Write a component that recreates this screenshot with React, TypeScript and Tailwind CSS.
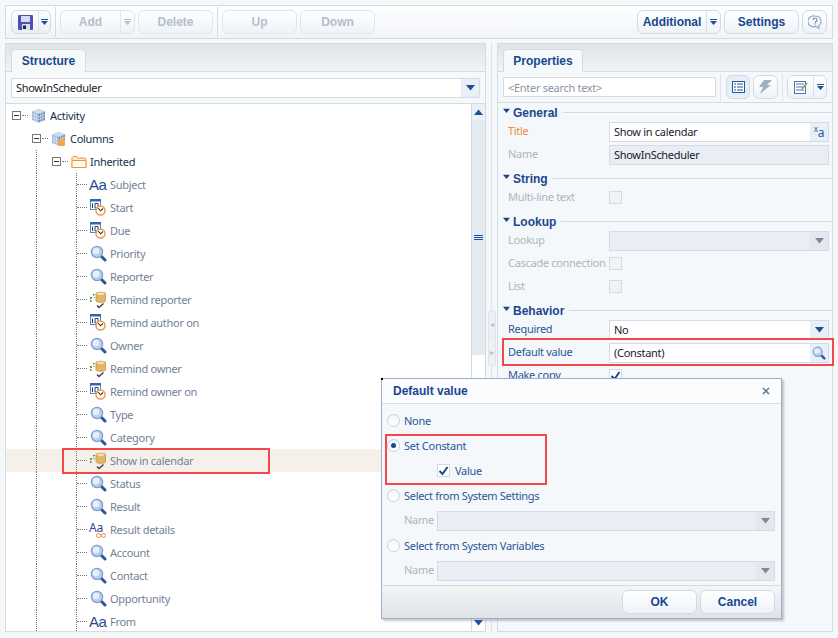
import React from 'react';

const boldFont = "font-['Liberation_Sans',sans-serif] font-bold text-[12px] tracking-normal";

const Caret = ({ color = '#1d4f9c', className = '' }: { color?: string; className?: string }) => (
  <svg className={className} width="9" height="6" viewBox="0 0 9 6"><path d="M0 0h9L4.5 5.5z" fill={color} /></svg>
);

const SmallCaret = ({ color = '#1d4f9c' }: { color?: string }) => (
  <svg width="7" height="6" viewBox="0 0 7 6"><path d="M0 0h7v1H0z" fill={color} /><path d="M0 2h7L3.5 6z" fill={color} /></svg>
);

const SearchIcon = ({ size = 17 }: { size?: number }) => (
  <svg width={size} height={size} viewBox="0 0 17 17">
    <path d="M10.500 10.500l4.500 4.500" stroke="#2f5596" strokeWidth="3" strokeLinecap="round" />
    <circle cx="7" cy="7" r="5.600" fill="#b9d0ee" stroke="#7f9fd2" strokeWidth="1.300" />
    <circle cx="6" cy="6" r="3.200" fill="#e6f0fb" />
  </svg>
);

const CalendarIcon = () => (
  <svg width="17" height="17" viewBox="0 0 17 17">
    <rect x="1.500" y="0.500" width="10" height="10" fill="#fff" stroke="#5c86c0" />
    <rect x="1" y="0" width="11" height="2.500" fill="#3566ad" />
    <path d="M3.500 4.500v4.500M6 4.500h3v4.500H6z" stroke="#1f3f7a" fill="none" />
    <circle cx="11.500" cy="11.500" r="4.500" fill="#fff" stroke="#ee9a4d" strokeWidth="1.500" />
    <path d="M9 9l2.500 2.800L14 9.500" stroke="#333" strokeWidth="1.100" fill="none" />
  </svg>
);

const BoolIcon = () => (
  <svg width="17" height="18" viewBox="0 0 17 18">
    <path d="M7 2.500C7 .8 16.500 .8 16.500 2.500V10c0 1.700-9.500 1.700-9.500 0z" fill="#e3b565" stroke="#bb9650" strokeWidth="0.800" />
    <ellipse cx="11.700" cy="2.800" rx="3.800" ry="1.200" fill="#f6e0ac" />
    <path d="M1 7h2M2 6v2M4 3.500h1.500M4.700 3v1.500M1 10h1.500M1.700 9.300v1.500M4.500 6.500h1" stroke="#1d8a1d" strokeWidth="1" />
    <path d="M8 14.500l2 2 4.500-4" stroke="#444" strokeWidth="1.500" fill="none" />
  </svg>
);

const LinkTextIcon = () => (
  <span className="relative block w-[17px] h-[18px] text-[#2a4a8e] text-[12px] leading-[13px] -tracking-[0.2px]">
    Aa
    <svg className="absolute left-[7px] top-[12px]" width="10" height="5" viewBox="0 0 10 5">
      <circle cx="2.500" cy="2.500" r="2" fill="none" stroke="#ee8a3a" />
      <circle cx="7.500" cy="2.500" r="2" fill="none" stroke="#ee8a3a" />
    </svg>
  </span>
);

const TextIcon = () => <span className="block w-[17px] font-['Liberation_Sans',sans-serif] text-[#2a4a8e] text-[15px] leading-[17px] tracking-[-0.6px]">Aa</span>;

const CubeIcon = ({ orange = false }: { orange?: boolean }) => (
  <svg width="15" height="15" viewBox="0 0 15 15">
    <path d="M1 3.500L7.500 1 14 3.500V12l-6.500 2.500L1 12z" fill="#9db6d8" />
    <path d="M1 3.500l6.500 2.500L14 3.500 7.500 1z" fill="#c4d4e8" />
    <path d="M7.500 6v8.500L14 12V3.500z" fill="#6f8fbd" />
    <path d="M3.200 4.300v9M5.300 5.100v9M9.700 5.100v9M11.800 4.300v9M1 6.300l6.500 2.500L14 6.300M1 9.100l6.500 2.500L14 9.100M3.200 2.600l6.500 2.500M5.300 1.800l6.500 2.500" stroke="#eaf0f7" strokeWidth="0.600" fill="none" />
    {orange && <rect x="7" y="8" width="7" height="7" rx="1" fill="#f2a64e" />}
  </svg>
);

const FolderIcon = () => (
  <svg width="16" height="14" viewBox="0 0 16 14">
    <path d="M1 12.500V2.500l1-1h3.500l1 1.500H14l1 1v8.500z" fill="#ffe9c8" stroke="#ea943c" />
    <path d="M1 12.500V7l1-1.500h12L15 7v5.500z" fill="#fffaf0" stroke="#ea943c" />
  </svg>
);

const Expander = () => (
  <span className="flex items-center justify-center w-[9px] h-[9px] border border-[#777] bg-white shrink-0">
    <span className="w-[5px] h-px bg-[#333]" />
  </span>
);

const Dots = ({ w }: { w: string }) => <span className={`border-t border-dotted border-[#777] shrink-0 ${w}`} />;

type Leaf = { label: string; icon: 'search' | 'text' | 'cal' | 'bool' | 'link'; selected?: boolean };

const leaves: Leaf[] = [
  { label: 'Subject', icon: 'text' },
  { label: 'Start', icon: 'cal' },
  { label: 'Due', icon: 'cal' },
  { label: 'Priority', icon: 'search' },
  { label: 'Reporter', icon: 'search' },
  { label: 'Remind reporter', icon: 'bool' },
  { label: 'Remind author on', icon: 'cal' },
  { label: 'Owner', icon: 'search' },
  { label: 'Remind owner', icon: 'bool' },
  { label: 'Remind owner on', icon: 'cal' },
  { label: 'Type', icon: 'search' },
  { label: 'Category', icon: 'search' },
  { label: 'Show in calendar', icon: 'bool', selected: true },
  { label: 'Status', icon: 'search' },
  { label: 'Result', icon: 'search' },
  { label: 'Result details', icon: 'link' },
  { label: 'Account', icon: 'search' },
  { label: 'Contact', icon: 'search' },
  { label: 'Opportunity', icon: 'search' },
  { label: 'From', icon: 'text' },
];

const LeafIcon = ({ icon }: { icon: Leaf['icon'] }) => {
  if (icon === 'search') return <span className="pl-[1px] w-[17px]"><SearchIcon /></span>;
  if (icon === 'cal') return <CalendarIcon />;
  if (icon === 'bool') return <BoolIcon />;
  if (icon === 'link') return <LinkTextIcon />;
  return <TextIcon />;
};

const VLine = ({ className = '' }: { className?: string }) => (
  <span className={`self-stretch border-l border-dotted border-[#777] shrink-0 ${className}`} />
);

const ToolButton = ({ label, className, disabled, split }: { label: string; className: string; disabled?: boolean; split?: boolean }) => (
  <div className={`flex h-6 items-stretch rounded-[6px] border bg-linear-to-b from-white to-[#eef3f8] ${boldFont} ${disabled ? 'border-[#dfe5ec] text-[#b4bfcc]' : 'border-[#cfdbe8] text-[#17488f]'} ${className}`}>
    <span className="flex-1 flex items-center justify-center">{label}</span>
    {split && (
      <span className={`w-[14px] flex items-center justify-center border-l ${disabled ? 'border-[#e3e8ee]' : 'border-[#d9e2ec]'}`}>
        <SmallCaret color={disabled ? '#b4bfcc' : '#1d4f9c'} />
      </span>
    )}
  </div>
);

const Section = ({ title }: { title: string }) => (
  <div className={`flex items-center h-[15px] mt-[5px] first:mt-[2px] pl-[5px] text-[#1b4590] ${boldFont}`}>
    <Caret className="mr-[3px] -mt-[3px] !w-[7px]" color="#1b4590" />
    <span>{title}</span>
    <span className="flex-1 ml-[5px] border-t border-[#d3dae1]" />
  </div>
);

const Label = ({ children, tone = 'disabled' }: { children: React.ReactNode; tone?: 'disabled' | 'active' | 'orange' }) => (
  <span className={`w-[101px] shrink-0 whitespace-nowrap ${tone === 'orange' ? 'text-[#f08a3c]' : tone === 'active' ? 'text-[#2c5597]' : 'text-[#aab5c3]'}`}>{children}</span>
);

const Check = () => (
  <svg width="11" height="10" viewBox="0 0 11 10"><path d="M1.500 5l3 3 5-7" stroke="#17488f" strokeWidth="2" fill="none" /></svg>
);

const CheckBox = ({ checked }: { checked?: boolean }) => (
  <span className={`flex items-center justify-center w-[13px] h-[13px] border border-[#d3dae2] ${checked ? 'bg-white' : 'bg-[#f0f3f6]'}`}>{checked && <Check />}</span>
);

const FieldRow = ({ children }: { children: React.ReactNode }) => (
  <div className="flex items-center pl-[10px] h-[23px]">{children}</div>
);

const Field = ({ value, disabled, side, w = 'w-[220px]' }: { value?: string; disabled?: boolean; side?: React.ReactNode; w?: string }) => (
  <div className={`flex items-stretch h-5 border ${w} ${disabled ? 'bg-[#e9edf4] border-[#d4dbe4]' : 'bg-white border-[#d4dbe4]'}`}>
    <span className="flex-1 pl-[4px] leading-[18px] text-[#18202c]">{value}</span>
    {side && <span className={`flex items-center justify-center w-[18px] ${disabled ? 'bg-[#e4e8ee]' : 'bg-[#e9eff6]'}`}>{side}</span>}
  </div>
);

const Radio = ({ on }: { on?: boolean }) => (
  <span className="flex items-center justify-center w-[13px] h-[13px] rounded-full border border-[#c8d2de] bg-linear-to-b from-[#f1f4f8] to-white shrink-0">
    {on && <span className="w-[5px] h-[5px] rounded-full bg-[#17488f]" />}
  </span>
);

const DialogOption = ({ label, on }: { label: string; on?: boolean }) => (
  <div className="flex items-center h-[25px] pl-[5px] gap-[4px] text-[#2c5597]">
    <Radio on={on} />
    <span className="pt-[2px]">{label}</span>
  </div>
);

const DialogName = () => (
  <div className="flex items-center h-[25px] pl-[22px] pr-[6px]">
    <span className="w-[33px] text-[#aab5c3]">Name</span>
    <Field disabled w="w-[338px]" side={<Caret color="#7a8aa0" />} />
  </div>
);

const PanelTab = ({ label, className }: { label: string; className: string }) => (
  <div className={`h-[23px] mt-[5px] rounded-t-[4px] border border-b-0 border-[#d5dbe1] bg-[#f6f9fa] flex items-center justify-center text-[#17488f] ${boldFont} ${className}`}>{label}</div>
);

const RedBox = ({ className }: { className: string }) => <div className={`absolute border-2 border-[#f44848] pointer-events-none ${className}`} />;

export default function App() {
  return (
    <div className="relative w-[838px] h-[638px] overflow-hidden bg-[#f5f8fa] pt-[5px] px-[5px] pb-[6px] flex flex-col gap-[4px] font-['Noto_Sans',sans-serif] text-[11px] tracking-[-0.3px]">
      {/* toolbar */}
      <div className="flex items-center h-[34px] shrink-0 border border-[#d5dbe1] bg-linear-to-b from-white to-[#f1f4f7] pl-[5px] pr-[5px]">
        <div className="flex h-6 w-[40px] rounded-[6px] border border-[#cfdbe8] bg-linear-to-b from-white to-[#e9eff6]">
          <span className="w-[26px] flex items-center justify-center">
            <svg width="15" height="15" viewBox="0 0 15 15">
              <rect width="15" height="15" rx="1" fill="#4a52b4" />
              <rect x="3" y="1" width="9" height="6" fill="#d5dbf3" />
              <rect x="4" y="9" width="8" height="6" fill="#d9dde6" />
              <rect x="5" y="10.500" width="3" height="3.500" fill="#26283c" />
            </svg>
          </span>
          <span className="flex-1 flex items-center justify-center border-l border-[#d9e2ec]"><SmallCaret /></span>
        </div>
        <span className="w-px h-[30px] bg-[#d5dbe1] mx-[4px]" />
        <ToolButton label="Add" className="w-[75px]" disabled split />
        <ToolButton label="Delete" className="w-[75px] ml-[3px]" disabled />
        <span className="w-px h-[30px] bg-[#d5dbe1] mx-[4px]" />
        <ToolButton label="Up" className="w-[75px]" disabled />
        <ToolButton label="Down" className="w-[75px] ml-[3px]" disabled />
        <span className="flex-1" />
        <ToolButton label="Additional" className="w-[84px]" split />
        <ToolButton label="Settings" className="w-[75px] ml-[3px]" />
        <div className="flex items-center justify-center w-[25px] h-6 ml-[3px] rounded-[6px] border border-[#cfdbe8] bg-linear-to-b from-white to-[#eef3f8]">
          <svg width="14" height="14" viewBox="0 0 14 14" fill="none">
            <path d="M7 1a6 5.500 0 0 1 3.500 10l.5 2.500-3-2a6 5.500 0 1 1-1-10.500z" stroke="#8fa5bf" strokeWidth="1.100" />
            <path d="M5 5a2 2 0 1 1 2.500 2L7 8.500M7 9.500v1" stroke="#6d88a9" strokeWidth="1.100" />
          </svg>
        </div>
      </div>

      <div className="relative flex flex-1 min-h-0">
        {/* structure panel */}
        <div className="w-[481px] shrink-0 flex flex-col border border-[#d5dbe1] bg-white">
          <div className="h-[28px] shrink-0 flex pl-[5px] bg-linear-to-b from-[#dfe3e8] to-[#f1f4f6] border-b border-[#d5dbe1]">
            <PanelTab label="Structure" className="w-[75px]" />
          </div>
          <div className="h-[32px] shrink-0 flex items-center pl-[5px] pr-[5px] bg-[#f6f9fa] border-b border-[#d5dbe1]">
            <div className="flex flex-1 h-5 border border-[#d4dbe4] bg-white">
              <span className="flex-1 pl-[4px] leading-[18px] text-[#18202c]">ShowInScheduler</span>
              <span className="w-[18px] flex items-center justify-center bg-[#e9eff6]"><Caret /></span>
            </div>
          </div>
          <div className="flex flex-1 min-h-0">
            <div className="flex-1 overflow-hidden">
              <div className="flex items-center h-[23px] pl-[6px]">
                <Expander />
                <Dots w="w-[6px] ml-[1px]" />
                <span className="ml-[3px]"><CubeIcon /></span>
                <span className="ml-[4px] pt-[2px] text-[#14304f]">Activity</span>
              </div>
              <div className="flex items-center h-[23px] pl-[26px]">
                <Expander />
                <Dots w="w-[6px] ml-[1px]" />
                <span className="ml-[3px]"><CubeIcon orange /></span>
                <span className="ml-[4px] pt-[2px] text-[#14304f]">Columns</span>
              </div>
              <div className="flex items-center h-[23px] pl-[30px]">
                <VLine />
                <span className="ml-[15px]"><Expander /></span>
                <Dots w="w-[6px] ml-[1px]" />
                <span className="ml-[3px]"><FolderIcon /></span>
                <span className="ml-[3px] pt-[2px] text-[#14304f]">Inherited</span>
              </div>
              {leaves.map((leaf) => (
                <div key={leaf.label} className={`flex items-center h-[23px] pl-[30px] ${leaf.selected ? 'bg-[#f5f1ea]' : ''}`}>
                  <VLine />
                  <VLine className="ml-[39px]" />
                  <Dots w="w-[10px]" />
                  <span className="ml-[2px] w-[21px] shrink-0 flex items-center"><LeafIcon icon={leaf.icon} /></span>
                  <span className="pt-[2px] text-[#738196]">{leaf.label}</span>
                </div>
              ))}
            </div>
            {/* scrollbar */}
            <div className="w-[14px] shrink-0 flex flex-col border-l border-[#d5dbe1] bg-white">
              <span className="h-[16px] flex items-center justify-center bg-[#eaf0f6]"><Caret className="rotate-180" /></span>
              <span className="h-[235px] flex flex-col items-center justify-center gap-[1px] bg-[#e3eaf2]">
                <span className="w-[9px] h-px bg-[#1a4fa8]" />
                <span className="w-[9px] h-px bg-[#1a4fa8]" />
                <span className="w-[9px] h-px bg-[#1a4fa8]" />
              </span>
              <span className="flex-1" />
              <span className="h-[16px] flex items-center justify-center bg-white"><Caret /></span>
            </div>
          </div>
        </div>

        {/* splitter */}
        <div className="w-[11px] shrink-0 pl-[5px]">
          <div className="h-full border-l border-[#dfe4e9]" />
        </div>

        {/* properties panel */}
        <div className="flex-1 min-w-0 flex flex-col border border-[#d5dbe1] bg-[#f5f8fa]">
          <div className="h-[28px] shrink-0 flex pl-[5px] bg-linear-to-b from-[#dfe3e8] to-[#f1f4f6] border-b border-[#d5dbe1]">
            <PanelTab label="Properties" className="w-[80px]" />
          </div>
          <div className="h-[31px] shrink-0 flex items-center pl-[5px] border-b border-[#d5dbe1]">
            <div className="w-[213px] h-5 border border-[#d4dbe4] bg-white pl-[4px] leading-[20px] text-[#8a94a2]">&lt;Enter search text&gt;</div>
            <span className="w-px h-[27px] bg-[#dfe4e9] ml-[4px] mr-[5px]" />
            <div className="flex items-center justify-center w-[24px] h-6 rounded-[6px] border border-[#cfdbe8] bg-[#e6eef7]">
              <svg width="13" height="12" viewBox="0 0 13 12" fill="none" stroke="#24569f">
                <rect x="0.500" y="0.500" width="12" height="11" fill="#fff" />
                <path d="M2 3h2M2 6h2M2 9h2M5 3h6M5 6h6M5 9h6" />
              </svg>
            </div>
            <div className="flex items-center justify-center w-[25px] h-6 ml-[3px] rounded-[6px] border border-[#cfdbe8] bg-linear-to-b from-white to-[#eef3f8]">
              <svg width="13" height="14" viewBox="0 0 13 14"><path d="M5 0h8L8 5h4L1 14l3-7H0z" fill="#9fb0c4" /></svg>
            </div>
            <span className="w-px h-[27px] bg-[#dfe4e9] ml-[4px] mr-[4px]" />
            <div className="flex w-[40px] h-6 rounded-[6px] border border-[#cfdbe8] bg-linear-to-b from-white to-[#eef3f8]">
              <span className="w-[25px] flex items-center justify-center">
                <svg width="14" height="13" viewBox="0 0 14 13" fill="none" stroke="#4a78b5">
                  <rect x="0.500" y="0.500" width="11" height="12" fill="#fff" />
                  <path d="M2 3h8M2 6h8M2 9h8" />
                  <path d="M13 2L8 8" stroke="#b28f4a" strokeWidth="1.500" />
                </svg>
              </span>
              <span className="flex-1 flex items-center justify-center border-l border-[#d9e2ec]"><SmallCaret /></span>
            </div>
          </div>
          <div className="flex-1">
            <Section title="General" />
            <FieldRow>
              <Label tone="orange">Title</Label>
              <Field
                value="Show in calendar"
                side={<span className="flex items-end h-[14px] leading-none text-[#2a5a9e]"><span className="text-[8px] self-start">x</span><span className="text-[12px]">a</span></span>}
              />
            </FieldRow>
            <FieldRow><Label>Name</Label><Field value="ShowInScheduler" disabled /></FieldRow>
            <Section title="String" />
            <FieldRow><Label>Multi-line text</Label><CheckBox /></FieldRow>
            <Section title="Lookup" />
            <FieldRow><Label>Lookup</Label><Field disabled side={<Caret color="#7a8aa0" />} /></FieldRow>
            <FieldRow><Label>Cascade connection</Label><CheckBox /></FieldRow>
            <FieldRow><Label>List</Label><CheckBox /></FieldRow>
            <Section title="Behavior" />
            <FieldRow><Label tone="active">Required</Label><Field value="No" side={<Caret />} /></FieldRow>
            <FieldRow><Label tone="active">Default value</Label><Field value="(Constant)" side={<SearchIcon size={14} />} /></FieldRow>
            <FieldRow><Label tone="active">Make copy</Label><CheckBox checked /></FieldRow>
          </div>
        </div>

        {/* collapse handles over the splitter */}
        <div className="absolute left-[483px] top-[267px] w-[8px] flex flex-col">
          <span className="h-[28px] flex items-center justify-center rounded-t-[3px] border border-[#dfe4e9] bg-[#eef1f4] text-[8px] text-[#b4bfcc]">◂</span>
          <span className="h-[28px] flex items-center justify-center rounded-b-[3px] border border-t-0 border-[#dfe4e9] bg-[#eef1f4] text-[8px] text-[#b4bfcc]">▸</span>
        </div>
      </div>

      {/* dialog */}
      <div className="absolute left-[381px] top-[378px] w-[401px] h-[241px] flex flex-col border border-[#9db0c6] bg-[#f5f8fa] shadow-[2px_2px_2px_rgba(90,100,110,0.35)]">
        <div className={`h-[25px] shrink-0 flex items-center justify-between px-[11px] border-b border-[#d5dbe1] bg-[#fafcfd] text-[#1b4590] ${boldFont}`}>
          <span>Default value</span>
          <svg width="8" height="8" viewBox="0 0 8 8"><path d="M1 1l6 6M7 1L1 7" stroke="#5f7690" strokeWidth="1.500" /></svg>
        </div>
        <div className="flex-1 pt-[4px]">
          <DialogOption label="None" />
          <DialogOption label="Set Constant" on />
          <div className="flex items-center h-[25px] pl-[55px] gap-[5px] text-[#2c5597]">
            <CheckBox checked />
            <span className="pt-[2px]">Value</span>
          </div>
          <DialogOption label="Select from System Settings" />
          <DialogName />
          <DialogOption label="Select from System Variables" />
          <DialogName />
        </div>
        <div className="h-[33px] shrink-0 flex items-center justify-end gap-[3px] pr-[6px] border-t border-[#d5dbe1] bg-linear-to-b from-[#f3f5f7] to-[#dfe3e8]">
          <ToolButton label="OK" className="w-[75px]" />
          <ToolButton label="Cancel" className="w-[75px]" />
        </div>
      </div>
      <span className="absolute left-[381px] top-[378px] w-[2px] h-[2px] bg-black" />

      <RedBox className="left-[62px] top-[448px] w-[208px] h-[26px]" />
      <RedBox className="left-[502px] top-[338px] w-[332px] h-[28px]" />
      <RedBox className="left-[385px] top-[434px] w-[162px] h-[51px]" />
    </div>
  );
}
